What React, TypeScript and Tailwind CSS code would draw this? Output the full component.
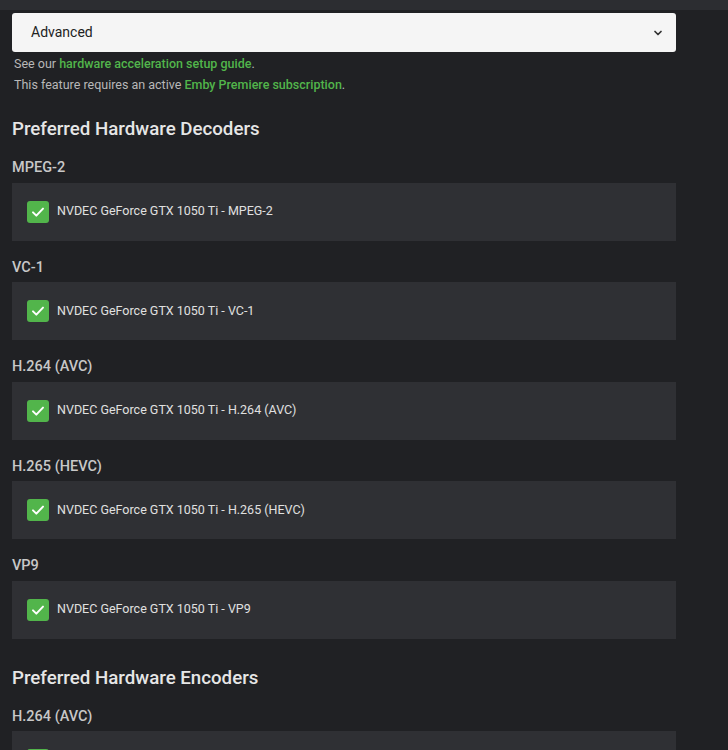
import React from "react";

const decoders = [
  { label: "MPEG-2", item: "NVDEC GeForce GTX 1050 Ti - MPEG-2" },
  { label: "VC-1", item: "NVDEC GeForce GTX 1050 Ti - VC-1" },
  { label: "H.264 (AVC)", item: "NVDEC GeForce GTX 1050 Ti - H.264 (AVC)" },
  { label: "H.265 (HEVC)", item: "NVDEC GeForce GTX 1050 Ti - H.265 (HEVC)" },
  { label: "VP9", item: "NVDEC GeForce GTX 1050 Ti - VP9" },
];

function Check() {
  return (
    <div className="w-[22px] h-[22px] rounded-[3px] bg-[#52b54b] flex items-center justify-center shrink-0">
      <svg width="16" height="16" viewBox="0 0 24 24" fill="none" stroke="#ffffff" strokeWidth="3" strokeLinecap="round" strokeLinejoin="round">
        <path d="M4.5 12.5l5 5L19.5 7" />
      </svg>
    </div>
  );
}

function Group({ label, item }: { label: string; item?: string }) {
  return (
    <div className="flex flex-col">
      <div className="mt-[18px] mb-[5.5px] leading-[18px] text-[14.5px] font-medium text-[#c8c8c8]">{label}</div>
      <div className="h-[58px] bg-[#2f3034] flex items-center pl-[15px] gap-[8px]">
        {item && (
          <>
            <Check />
            <span className="text-[12.5px] text-[#e0e0e0]">{item}</span>
          </>
        )}
      </div>
    </div>
  );
}

export default function App() {
  return (
    <div className="h-[750px] bg-[#202124] overflow-hidden" style={{ fontFamily: "Roboto, 'Noto Sans', sans-serif" }}>
      <div className="h-[10px] bg-[#2c2d31]" />
      <div className="pl-[12px] w-[676px]">
        <div className="mt-[3px] h-[39px] rounded-[3px] bg-[#f5f5f5] flex items-center justify-between pl-[19px] pr-[12px]">
          <span className="text-[14px] text-[#222]">Advanced</span>
          <svg width="12" height="12" viewBox="0 0 24 24" fill="none" stroke="#333" strokeWidth="3.5" strokeLinecap="round" strokeLinejoin="round">
            <path d="M6 9l6 6 6-6" />
          </svg>
        </div>
        <div className="pl-[2px] text-[12.5px] leading-[21px] text-[#b8b8b8] mt-[1px]">
          <div>
            See our <span className="text-[#52b54b] font-medium">hardware acceleration setup guide</span>.
          </div>
          <div>
            This feature requires an active <span className="text-[#52b54b] font-medium">Emby Premiere subscription</span>.
          </div>
        </div>
        <h2 className="mt-[22px] text-[18.7px] leading-[24px] font-medium text-[#e6e6e6]">Preferred Hardware Decoders</h2>
        {decoders.map((d) => (
          <Group key={d.label} label={d.label} item={d.item} />
        ))}
        <h2 className="mt-[27px] text-[18.7px] leading-[24px] font-medium text-[#e6e6e6]">Preferred Hardware Encoders</h2>
        <Group label="H.264 (AVC)" item="NVENC GeForce GTX 1050 Ti - H.264 (AVC)" />
      </div>
    </div>
  );
}
